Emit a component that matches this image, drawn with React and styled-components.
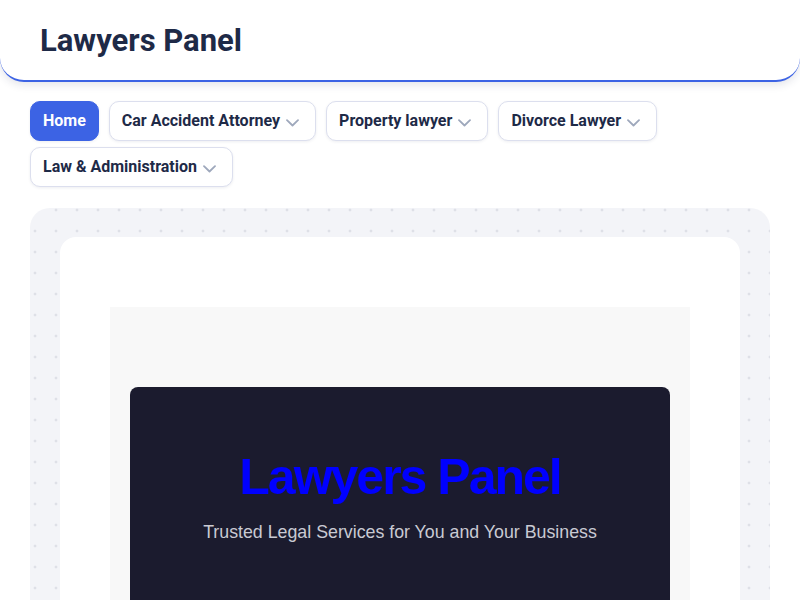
import React from "react";
import styled, { createGlobalStyle } from "styled-components";

const GlobalStyle = createGlobalStyle`
  body {
    margin: 0;
    background: #ffffff;
    font-family: Roboto, "Liberation Sans", sans-serif;
  }
`;

const Header = styled.header`
  height: 80px;
  display: flex;
  align-items: center;
  padding: 0 40px;
  background: #ffffff;
  border-bottom: 2px solid #3c63e4;
  border-radius: 0 0 24px 24px;
  box-shadow: 0 3px 8px rgba(30, 41, 80, 0.12);
`;

const Brand = styled.h1`
  margin: 0;
  font-size: 31px;
  font-weight: 700;
  color: #1e2a47;
`;

const Nav = styled.nav`
  display: flex;
  flex-wrap: wrap;
  gap: 6px 10px;
  padding: 19px 30px 0;
`;

const NavButton = styled.button`
  display: flex;
  align-items: center;
  gap: 6px;
  height: 40px;
  padding: ${(p) => (p.$active ? "0 12px 1px" : "0 16px 1px 12px")};
  font-family: Roboto, sans-serif;
  font-size: 16px;
  font-weight: 700;
  color: ${(p) => (p.$active ? "#ffffff" : "#1e2a47")};
  background: ${(p) => (p.$active ? "#3c63e4" : "#ffffff")};
  border: 1px solid ${(p) => (p.$active ? "#3c63e4" : "#dcdfee")};
  border-radius: 10px;
  box-shadow: 0 1px 3px rgba(30, 41, 80, 0.08);
  cursor: pointer;
`;

const ChevronIcon = styled.svg`
  flex-shrink: 0;
  margin-top: 5px;
`;

const Chevron = () => (
  <ChevronIcon width="13" height="8" viewBox="0 0 13 8" fill="none" stroke="#9ea8bc" strokeWidth="1.8" strokeLinecap="round" strokeLinejoin="round">
    <path d="M1 1.2l5.5 5.3 5.5-5.3" />
  </ChevronIcon>
);

const Canvas = styled.section`
  margin: 21px 30px 0;
  padding: 29px 30px 0;
  border-radius: 20px 20px 0 0;
  background-color: #f3f4f8;
  background-image: radial-gradient(circle, #c9ccd6 0.8px, transparent 1.2px);
  background-size: 21px 21px;
  background-position: -5.5px -8.5px;
`;

const Card = styled.div`
  background: #ffffff;
  border-radius: 16px 16px 0 0;
  padding: 70px 50px 0;
`;

const Stage = styled.div`
  background: #f8f8f8;
  padding: 80px 20px 0;
`;

const Hero = styled.div`
  background: #1b1b2e;
  border-radius: 8px 8px 0 0;
  padding: 60px 20px 120px;
  text-align: center;
  font-family: "Liberation Sans", Arial, sans-serif;
`;

const HeroTitle = styled.h2`
  margin: 0;
  font-size: 50px;
  font-weight: 700;
  line-height: 1.2;
  letter-spacing: -2px;
  color: #0000ff;
`;

const HeroText = styled.p`
  margin: 15px 0 0;
  font-size: 17.8px;
  color: #c9cad3;
`;

const items = [
  { label: "Home", active: true },
  { label: "Car Accident Attorney" },
  { label: "Property lawyer" },
  { label: "Divorce Lawyer" },
  { label: "Law & Administration" },
];

export default function App() {
  return (
    <>
      <GlobalStyle />
      <Header>
        <Brand>Lawyers Panel</Brand>
      </Header>
      <Nav>
        {items.map((it) => (
          <NavButton key={it.label} $active={it.active}>
            {it.label}
            {!it.active && <Chevron />}
          </NavButton>
        ))}
      </Nav>
      <Canvas>
        <Card>
          <Stage>
            <Hero>
              <HeroTitle>Lawyers Panel</HeroTitle>
              <HeroText>Trusted Legal Services for You and Your Business</HeroText>
            </Hero>
          </Stage>
        </Card>
      </Canvas>
    </>
  );
}
